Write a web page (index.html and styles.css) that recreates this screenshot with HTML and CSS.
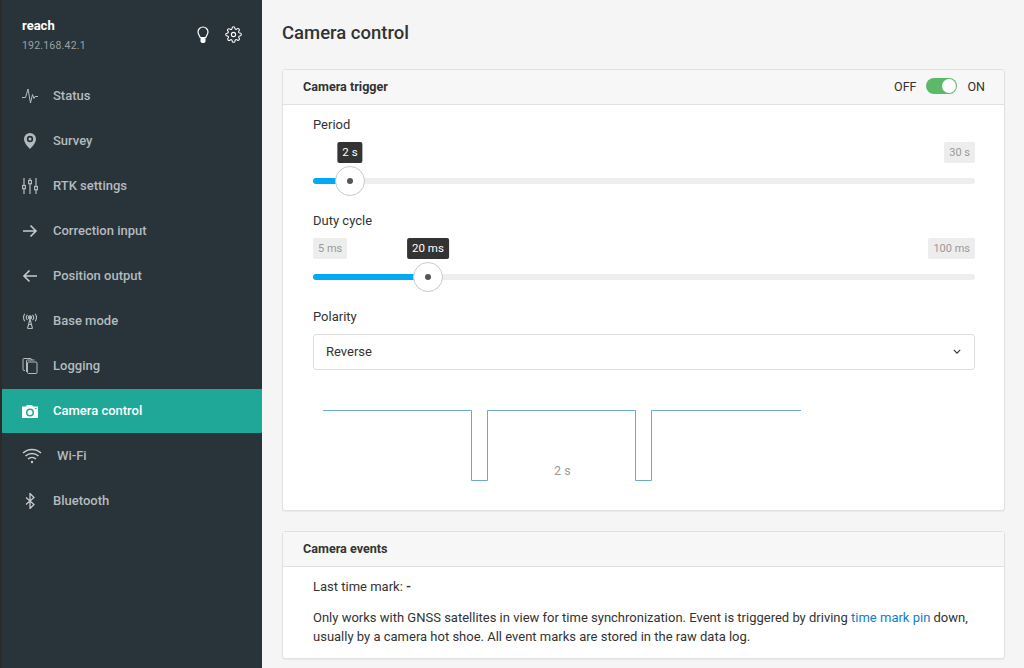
FILE: index.html
```html
<!DOCTYPE html>
<html lang="en">
<head>
  <meta charset="UTF-8">
  <title>Camera control</title>
  <link rel="stylesheet" href="styles.css">
</head>
<body>
  <aside class="sidebar">
    <div class="device">
      <div class="device-info">
        <div class="device-name">reach</div>
        <div class="device-ip">192.168.42.1</div>
      </div>
      <svg class="device-icon bulb" viewBox="0 0 14 18" width="14" height="18">
        <path d="M7 1a5 5 0 0 0-5 5c0 2.200 1.600 3.400 2.200 5.500h5.600C10.400 9.400 12 8.200 12 6a5 5 0 0 0-5-5z" fill="none" stroke="#fff" stroke-width="1.200"/>
        <path d="M4.500 12h5v3.500l-1.200 1.500H5.700l-1.200-1.500z" fill="#fff"/>
      </svg>
      <svg class="device-icon gear" viewBox="0 0 24 24" width="17" height="17" fill="none" stroke="#fff" stroke-width="1.500">
        <circle cx="12" cy="12" r="3"/>
        <path d="M19.400 15a1.650 1.650 0 0 0 .33 1.820l.06.06a2 2 0 1 1-2.830 2.830l-.06-.06a1.650 1.650 0 0 0-2.800 1.170V21a2 2 0 1 1-4 0v-.09a1.650 1.650 0 0 0-2.820-1.120l-.06.06a2 2 0 1 1-2.830-2.830l.06-.06a1.650 1.650 0 0 0-1.170-2.800H3a2 2 0 1 1 0-4h.09a1.650 1.650 0 0 0 1.120-2.820l-.06-.06a2 2 0 1 1 2.830-2.830l.06.06a1.650 1.650 0 0 0 1.820.33H9a1.650 1.650 0 0 0 1-1.510V3a2 2 0 1 1 4 0v.09a1.650 1.650 0 0 0 2.820 1.120l.06-.06a2 2 0 1 1 2.830 2.830l-.06.06a1.650 1.650 0 0 0-.33 1.820V9a1.650 1.650 0 0 0 1.510 1H21a2 2 0 1 1 0 4h-.09a1.650 1.650 0 0 0-1.510 1z"/>
      </svg>
    </div>
    <nav class="nav">
      <a class="nav-item">
        <svg class="nav-icon" viewBox="0 0 16 16" fill="none" stroke="#b4bbbe" stroke-width="1"><path d="M0 9.500h3.500L6 1l2.500 14 2-8.500 1.500 4 1-2h3"/></svg>
        <span>Status</span>
      </a>
      <a class="nav-item">
        <svg class="nav-icon" viewBox="0 0 16 16"><path fill-rule="evenodd" fill="#b4bbbe" d="M8 0a6 6 0 0 0-6 6c0 4 4.500 8.500 6 10 1.500-1.500 6-6 6-10a6 6 0 0 0-6-6zm0 2.800a3.200 3.200 0 1 1 0 6.400 3.200 3.200 0 0 1 0-6.400z"/><circle cx="8" cy="6" r="1.500" fill="#b4bbbe"/></svg>
        <span>Survey</span>
      </a>
      <a class="nav-item">
        <svg class="nav-icon" viewBox="0 0 16 16" fill="none" stroke="#b4bbbe" stroke-width="1.200"><path d="M2 0v7M2 11v5M8 0v2M8 6v10M14 0v8M14 12v4"/><rect x=".6" y="7.500" width="2.800" height="3.200"/><rect x="6.600" y="2.500" width="2.800" height="3.200"/><rect x="12.600" y="8.500" width="2.800" height="3.200"/></svg>
        <span>RTK settings</span>
      </a>
      <a class="nav-item">
        <svg class="nav-icon" viewBox="0 0 16 16" fill="none" stroke="#c6cbcd" stroke-width="1.600"><path d="M1 8h13M8.500 2.500 14 8l-5.500 5.500"/></svg>
        <span>Correction input</span>
      </a>
      <a class="nav-item">
        <svg class="nav-icon" viewBox="0 0 16 16" fill="none" stroke="#c6cbcd" stroke-width="1.600"><path d="M15 8H2M7.500 2.500 2 8l5.500 5.500"/></svg>
        <span>Position output</span>
      </a>
      <a class="nav-item">
        <svg class="nav-icon" viewBox="0 0 16 16" fill="none" stroke="#b4bbbe" stroke-width="1.100"><circle cx="8" cy="4.500" r="1.600" fill="#b4bbbe"/><path d="M5.500 1.800a4 4 0 0 0 0 5.400M10.500 1.800a4 4 0 0 1 0 5.400M2.800.8a6.500 6.500 0 0 0 0 7.400M13.200.8a6.500 6.500 0 0 1 0 7.400M8 6 5.500 15.500M8 6l2.500 9.500M6.500 11.500h3M5.500 15.500h5"/></svg>
        <span>Base mode</span>
      </a>
      <a class="nav-item">
        <svg class="nav-icon" viewBox="0 0 16 16" fill="none" stroke="#b4bbbe" stroke-width="1"><path d="M3 12.500H2a1 1 0 0 1-1-1V1.500a1 1 0 0 1 1-1h7l1 1.500"/><path d="M4.500 14V3a1 1 0 0 1 1-1h7"/><rect x="5.500" y="4" width="9.500" height="11.500" rx="1"/></svg>
        <span>Logging</span>
      </a>
      <a class="nav-item active">
        <svg class="nav-icon" viewBox="0 0 16 14"><path fill-rule="evenodd" fill="#fff" d="M0 2.500h4L5 1h5l1 1.500h5V14H0zM8 4.500a4 4 0 1 0 0 8 4 4 0 0 0 0-8zm0 1.500a2.500 2.500 0 1 1 0 5 2.500 2.500 0 0 1 0-5zM13 4v1h1.500V4z"/></svg>
        <span>Camera control</span>
      </a>
      <a class="nav-item wifi">
        <svg class="nav-icon" viewBox="0 0 20 16" fill="none" stroke="#c6cbcd" stroke-width="1.500"><path d="M1 5a13 13 0 0 1 18 0M3.500 8a9.500 9.500 0 0 1 13 0M6 11a6 6 0 0 1 8 0"/><circle cx="10" cy="14" r="1.200" fill="#c6cbcd" stroke="none"/></svg>
        <span>Wi-Fi</span>
      </a>
      <a class="nav-item">
        <svg class="nav-icon" viewBox="0 0 16 16" fill="none" stroke="#c6cbcd" stroke-width="1.300"><path d="m4 4.500 8 7L8 15.500V.5l4 4-8 7"/></svg>
        <span>Bluetooth</span>
      </a>
    </nav>
  </aside>

  <main class="content">
    <h1 class="page-title">Camera control</h1>

    <section class="card trigger-card">
      <header class="card-header">
        <h2>Camera trigger</h2>
        <div class="switch-group">
          <span>OFF</span>
          <span class="switch"><span class="switch-knob"></span></span>
          <span>ON</span>
        </div>
      </header>
      <div class="card-body">
        <div class="field-label">Period</div>
        <div class="slider">
          <div class="slider-limits">
            <span class="limit hidden">2 s</span>
            <span class="limit">30 s</span>
          </div>
          <div class="track"><div class="track-fill period-fill"></div></div>
          <div class="bubble period-bubble">2 s</div>
          <div class="thumb period-thumb"></div>
        </div>

        <div class="field-label">Duty cycle</div>
        <div class="slider">
          <div class="slider-limits">
            <span class="limit">5 ms</span>
            <span class="limit">100 ms</span>
          </div>
          <div class="track"><div class="track-fill duty-fill"></div></div>
          <div class="bubble duty-bubble">20 ms</div>
          <div class="thumb duty-thumb"></div>
        </div>

        <div class="field-label">Polarity</div>
        <div class="select">
          <span>Reverse</span>
          <svg viewBox="0 0 10 6" width="8" height="5" fill="none" stroke="#333" stroke-width="1.400"><path d="m1 1 4 4 4-4"/></svg>
        </div>

        <div class="signal">
          <svg viewBox="0 0 478 72" width="478" height="72" fill="none" stroke="#6aa9d6" stroke-width="1">
            <path d="M0 1.500h148.500v70h16v-70h148v70h16v-70H478"/>
          </svg>
          <span class="signal-label">2 s</span>
        </div>
      </div>
    </section>

    <section class="card">
      <header class="card-header">
        <h2>Camera events</h2>
      </header>
      <div class="card-body events-body">
        <p class="time-mark">Last time mark: <b>-</b></p>
        <p>Only works with GNSS satellites in view for time synchronization. Event is triggered by driving <a class="link">time mark pin</a> down, usually by a camera hot shoe. All event marks are stored in the raw data log.</p>
      </div>
    </section>
  </main>
</body>
</html>
```

FILE: styles.css
```css
* {
  margin: 0;
  padding: 0;
  box-sizing: border-box;
}

html, body {
  height: 100%;
  overflow: hidden;
}

body {
  display: flex;
  font-family: Roboto, 'Liberation Sans', sans-serif;
  font-size: 13px;
  color: #333;
  background-color: #f5f5f5;
}

/* sidebar */
.sidebar {
  width: 262px;
  flex: none;
  background-color: #29333a;
  border-left: 2px solid #2b2b2b;
}

.device {
  height: 73px;
  display: flex;
  align-items: flex-start;
  padding: 18px 20px 0 20px;
  color: #fff;
}

.device-info {
  flex: 1;
}

.device-name {
  font-size: 13px;
  font-weight: 700;
  line-height: 15px;
}

.device-ip {
  font-size: 10.500px;
  color: #9aa1a5;
  letter-spacing: .2px;
  margin-top: 6px;
  line-height: 14px;
}

.device-icon {
  flex: none;
}

.bulb {
  margin: 8px 15px 0 0;
}

.gear {
  margin: 8px 0 0 0;
}

.nav-item {
  height: 45px;
  display: flex;
  align-items: center;
  padding: 0 0 0 20px;
  font-size: 13px;
  font-weight: 500;
  color: #b4bbbe;
}

.nav-item span {
  margin-left: 15px;
}

.nav-item.active {
  height: 44px;
  margin-top: 1px;
  padding-bottom: 1px;
  background-color: #1fa898;
  color: #fff;
}

.nav-item.wifi .nav-icon {
  width: 20px;
}

.nav-icon {
  width: 16px;
  height: 16px;
  flex: none;
}

/* main area */
.content {
  flex: 1;
  padding: 0 19px 0 20px;
}

.page-title {
  font-size: 18.500px;
  font-weight: 500;
  line-height: 22px;
  margin: 22px 0 25px 0;
  color: #333;
}

.card {
  background-color: #fff;
  border: 1px solid #e1e1e1;
  border-radius: 3px;
  box-shadow: 0 1px 1px rgba(0, 0, 0, 0.05);
  margin-bottom: 20px;
}

.trigger-card {
  height: 442px;
}

.card-header {
  height: 35px;
  display: flex;
  align-items: center;
  justify-content: space-between;
  padding: 0 19px 2px 20px;
  background-color: #f7f7f7;
  border-bottom: 1px solid #e1e1e1;
}

.card-header h2 {
  font-size: 12.600px;
  font-weight: 700;
  color: #333;
}

.switch-group {
  display: flex;
  align-items: center;
  gap: 10px;
  font-size: 12.500px;
}

.switch {
  width: 31px;
  height: 16px;
  border-radius: 8px;
  background-color: #5cb96a;
  display: flex;
  justify-content: flex-end;
  align-items: center;
  padding-right: 1px;
}

.switch-knob {
  width: 14px;
  height: 14px;
  border-radius: 50%;
  background-color: #fff;
}

.card-body {
  padding: 0 29px 0 30px;
}

.field-label {
  font-size: 13px;
  line-height: 15px;
  padding-top: 12px;
  height: 27px;
}

/* sliders */
.slider {
  position: relative;
  height: 69px;
  padding-top: 10px;
}

.slider-limits {
  display: flex;
  justify-content: space-between;
  height: 21px;
}

.limit {
  background-color: #ededed;
  color: #999;
  font-size: 11px;
  line-height: 21px;
  padding: 0 5px;
  border-radius: 2px;
}

.limit.hidden {
  visibility: hidden;
}

.track {
  height: 6px;
  margin-top: 15px;
  background-color: #eee;
  border-radius: 3px;
  overflow: hidden;
}

.track-fill {
  height: 100%;
  background-color: #03a9f4;
}

.period-fill {
  width: 37px;
}

.duty-fill {
  width: 115px;
}

.bubble {
  position: absolute;
  top: 10px;
  height: 21px;
  line-height: 21px;
  padding: 0 5px;
  background-color: #333;
  color: #fff;
  font-size: 11.500px;
  border-radius: 2px;
  transform: translateX(-50%);
}

.period-bubble {
  left: 37px;
}

.duty-bubble {
  left: 115px;
}

.thumb {
  position: absolute;
  top: 34px;
  width: 30px;
  height: 30px;
  margin-left: -15px;
  border-radius: 50%;
  background-color: #fff;
  border: 1px solid #c9c9c9;
}

.thumb::after {
  content: '';
  position: absolute;
  left: 11px;
  top: 11px;
  width: 6px;
  height: 6px;
  border-radius: 50%;
  background-color: #555;
}

.period-thumb {
  left: 37px;
}

.duty-thumb {
  left: 115px;
}

/* polarity */
.select {
  height: 36px;
  margin-top: 10px;
  display: flex;
  align-items: center;
  justify-content: space-between;
  padding: 0 13px 1px 12px;
  border: 1px solid #ddd;
  border-radius: 3px;
  font-size: 13px;
}

.signal {
  position: relative;
  margin: 39px 0 0 10px;
  height: 72px;
}

.signal svg {
  display: block;
}

.signal-label {
  position: absolute;
  left: 231px;
  top: 54px;
  color: #999;
  font-size: 12.500px;
}

/* events */
.events-body {
  padding-top: 10px;
  padding-bottom: 12px;
  font-size: 13px;
  line-height: 19px;
}

.time-mark {
  margin-bottom: 12px;
}

.link {
  color: #0a7fd1;
}
```
